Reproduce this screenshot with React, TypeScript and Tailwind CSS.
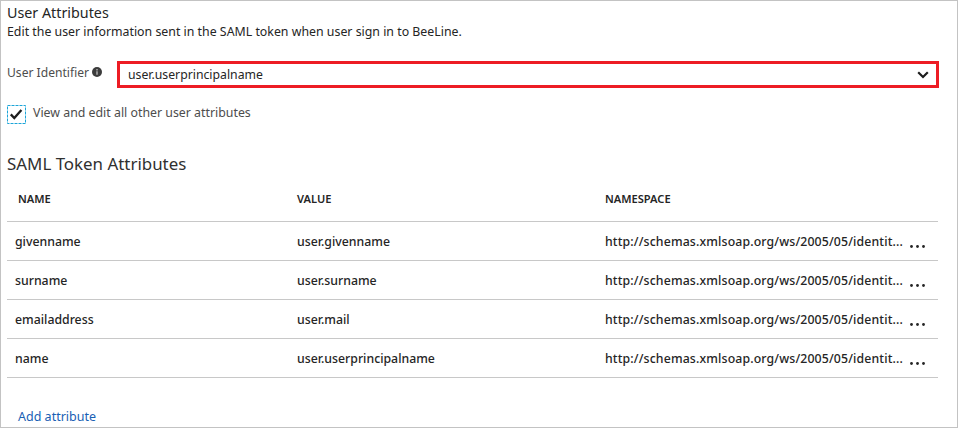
const rows = [
  { name: "givenname", value: "user.givenname" },
  { name: "surname", value: "user.surname" },
  { name: "emailaddress", value: "user.mail" },
  { name: "name", value: "user.userprincipalname" },
];

export default function App() {
  return (
    <main className="box-border h-[428px] w-[958px] overflow-hidden border border-[#c3c3c3] bg-white pl-[6px] pr-[19px] font-['Noto_Sans',sans-serif] text-[12.35px] text-[#252525]">
      <h1 className="mt-[2px] h-5 whitespace-nowrap text-[14.3px] leading-5">
        <span>User Attributes</span>
      </h1>
      <p className="h-4 whitespace-nowrap leading-[17px]">
        <span>Edit the user information sent in the SAML token when user sign in to BeeLine.</span>
      </p>

      <div className="-mr-px mt-[22px] flex h-[27px]">
        <label className="flex h-[22px] w-[110px] items-center whitespace-nowrap text-[12.1px] text-[#4d4d4d]">
          <span className="pt-[2px]">User Identifier</span>
          <svg className="ml-[3px]" width="10" height="10" viewBox="0 0 10 10">
            <circle cx="5" cy="5" r="5" fill="#3c3c3c" />
            <path d="M5 4.2v3.6M5 2.1v1.3" stroke="#b5b5b5" strokeWidth="1.4" fill="none" />
          </svg>
        </label>
        <div className="flex flex-1 items-center justify-between border-[3px] border-[#ed1c24] pl-2 pr-[7px] text-[12.25px]">
          <span className="pt-[2px]">user.userprincipalname</span>
          <svg width="12" height="8" viewBox="0 0 12 8" fill="none">
            <path d="M1.2 1.2 6 6 10.8 1.2" stroke="#1d1d1d" strokeWidth="2.2" />
          </svg>
        </div>
      </div>

      <div className="mt-[17px] flex h-[19px]">
        <span className="flex size-[19px] items-center justify-center">
          <svg width="19" height="19" viewBox="0 0 19 19" fill="none">
            <rect x="0.5" y="0.5" width="18" height="18" stroke="#1ba5d8" strokeDasharray="3 1" />
            <path d="m3.8 9.4 3.5 3.6 7.1-8" stroke="#1d1d1d" strokeWidth="2.3" />
          </svg>
        </span>
        <span className="ml-[7px] whitespace-nowrap leading-4 text-[#4d4d4d]">View and edit all other user attributes</span>
      </div>

      <h2 className="mt-7 h-6 whitespace-nowrap text-[16.9px] leading-6 text-[#303030]">
        <span>SAML Token Attributes</span>
      </h2>

      <section>
        <div className="flex h-[46px] items-center border-b border-[#c8c8c8] pt-[2px] text-[11.1px] font-semibold">
          <span className="w-[290px] pl-[11px]"><span>NAME</span></span>
          <span className="w-[308px]"><span>VALUE</span></span>
          <span><span>NAMESPACE</span></span>
        </div>
        {rows.map((row) => (
          <div key={row.name} className="flex h-[39px] items-center whitespace-nowrap border-b border-[#c8c8c8] pt-[2px] text-[12.3px] font-medium">
            <span className="w-[290px] pl-2">{row.name}</span>
            <span className="w-[308px]">{row.value}</span>
            <span className="w-[305px] tracking-[0.14px]">http://schemas.xmlsoap.org/ws/2005/05/identit...</span>
            <svg className="mt-[9px]" width="15" height="3" viewBox="0 0 15 3" fill="#252525">
              <circle cx="1.5" cy="1.5" r="1.4" />
              <circle cx="7.5" cy="1.5" r="1.4" />
              <circle cx="13.5" cy="1.5" r="1.4" />
            </svg>
          </div>
        ))}
      </section>

      <a className="ml-[11px] mt-[31px] block h-4 whitespace-nowrap text-[12.5px] leading-4 text-[#1860b4]">
        <span>Add attribute</span>
      </a>
    </main>
  );
}
